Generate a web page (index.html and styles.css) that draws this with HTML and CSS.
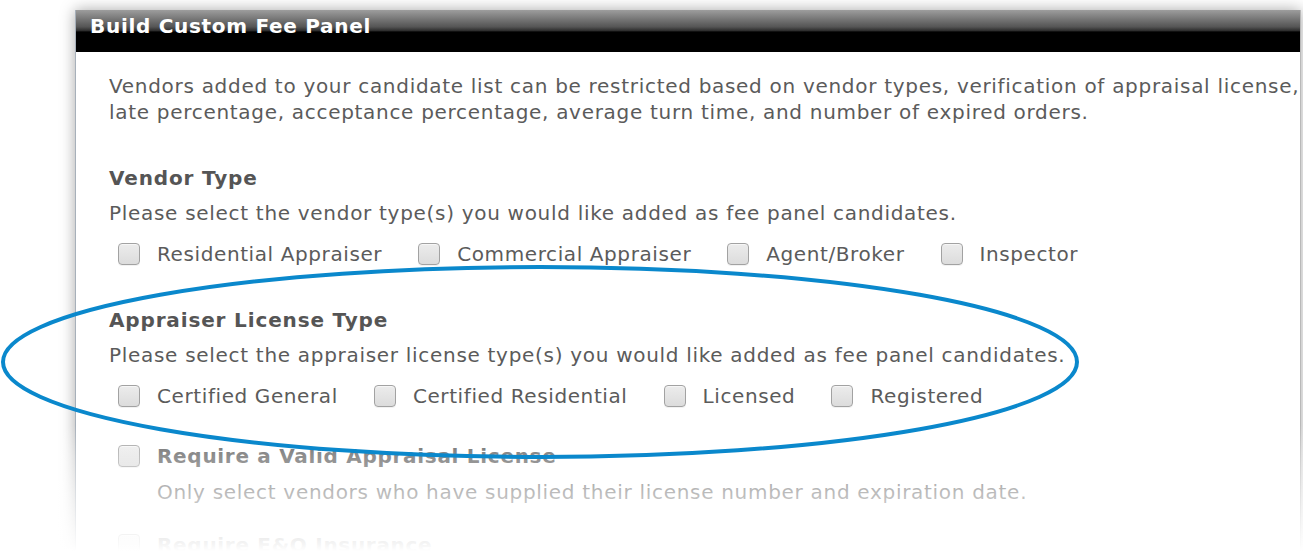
FILE: index.html
```html
<!DOCTYPE html>
<html lang="en">
<head>
    <meta charset="UTF-8">
    <meta name="viewport" content="width=device-width, initial-scale=1.0">
    <title>Build Custom Fee Panel</title>
    <link rel="stylesheet" href="styles.css">
</head>
<body>
    <div class="panel">
        <div class="panel-header">Build Custom Fee Panel</div>
        <div class="panel-body">
            <p class="intro">Vendors added to your candidate list can be restricted based on vendor types, verification of appraisal license, late percentage, acceptance percentage, average turn time, and number of expired orders.</p>

            <div class="section">
                <h2>Vendor Type</h2>
                <p class="hint">Please select the vendor type(s) you would like added as fee panel candidates.</p>
                <div class="options">
                    <label class="option"><span class="box"></span>Residential Appraiser</label>
                    <label class="option"><span class="box"></span>Commercial Appraiser</label>
                    <label class="option"><span class="box"></span>Agent/Broker</label>
                    <label class="option"><span class="box"></span>Inspector</label>
                </div>
            </div>

            <div class="section">
                <h2>Appraiser License Type</h2>
                <p class="hint">Please select the appraiser license type(s) you would like added as fee panel candidates.</p>
                <div class="options">
                    <label class="option"><span class="box"></span>Certified General</label>
                    <label class="option"><span class="box"></span>Certified Residential</label>
                    <label class="option"><span class="box"></span>Licensed</label>
                    <label class="option"><span class="box"></span>Registered</label>
                </div>
            </div>

            <div class="toggle">
                <label class="option strong"><span class="box"></span>Require a Valid Appraisal License</label>
                <p class="hint sub">Only select vendors who have supplied their license number and expiration date.</p>
            </div>

            <div class="toggle last">
                <label class="option strong"><span class="box"></span>Require E&amp;O Insurance</label>
            </div>
        </div>
    </div>

    <div class="fade"></div>

    <svg class="circle" width="1303" height="551" viewBox="0 0 1303 551">
        <ellipse cx="540" cy="362" rx="537" ry="95" fill="none" stroke="#0a88cc" stroke-width="4"/>
    </svg>
</body>
</html>
```

FILE: styles.css
```css
body {
    margin: 0;
    padding: 0;
    background: #fff;
    font-family: 'DejaVu Sans', Verdana, sans-serif;
    color: #5b5b5b;
    overflow: hidden;
    height: 551px;
}

.panel {
    margin: 10px 0 0 75px;
    width: 1224px;
    height: 560px;
    overflow: hidden;
    border-left: 1px solid #a7b0ba;
    border-right: 1px solid #b9b9b9;
    background: #fff;
    box-shadow: 0 0 14px rgba(0, 0, 0, 0.35);
}

.panel-header {
    height: 42px;
    line-height: 32px;
    padding-left: 14px;
    color: #fff;
    font-size: 20px;
    letter-spacing: 0.7px;
    font-weight: bold;
    background: linear-gradient(to bottom, #9d9d9d 0%, #555 40%, #2a2a2a 50%, #000 52%, #000 100%);
}

.panel-body {
    padding: 21px 0 0 33px;
    font-size: 20px;
    letter-spacing: 0.7px;
    line-height: 26px;
}

p {
    margin: 0;
}

.section {
    margin-top: 40px;
}

h2 {
    margin: 0 0 9px 0;
    font-size: 20px;
    line-height: 26px;
    letter-spacing: 0.85px;
    font-weight: bold;
    color: #555;
}

.options {
    display: flex;
    gap: 36px;
    margin-top: 15px;
    padding-left: 9px;
    letter-spacing: 0.6px;
}

.option {
    display: flex;
    align-items: center;
    height: 26px;
}

.box {
    display: inline-block;
    width: 20px;
    height: 20px;
    margin-right: 17px;
    border: 1px solid #a2a2a2;
    border-radius: 4px;
    background: linear-gradient(to bottom, #ececec, #dcdcdc);
    box-shadow: 0 1px 0 #f2f2f2, inset 0 1px 0 #f6f6f6;
}

.toggle {
    margin-top: 34px;
    padding-left: 9px;
}

.toggle.last {
    margin-top: 27px;
}

.strong {
    font-weight: bold;
}

.sub {
    margin-top: 10px;
    padding-left: 39px;
}

.fade {
    position: absolute;
    left: 0;
    top: 425px;
    width: 1303px;
    height: 126px;
    background: linear-gradient(to bottom, rgba(255, 255, 255, 0) 0%, rgba(255, 255, 255, 0.3) 24%, rgba(255, 255, 255, 0.58) 53%, rgba(255, 255, 255, 0.94) 95%, #fff 100%);
}

.circle {
    position: absolute;
    left: 0;
    top: 0;
}
```
